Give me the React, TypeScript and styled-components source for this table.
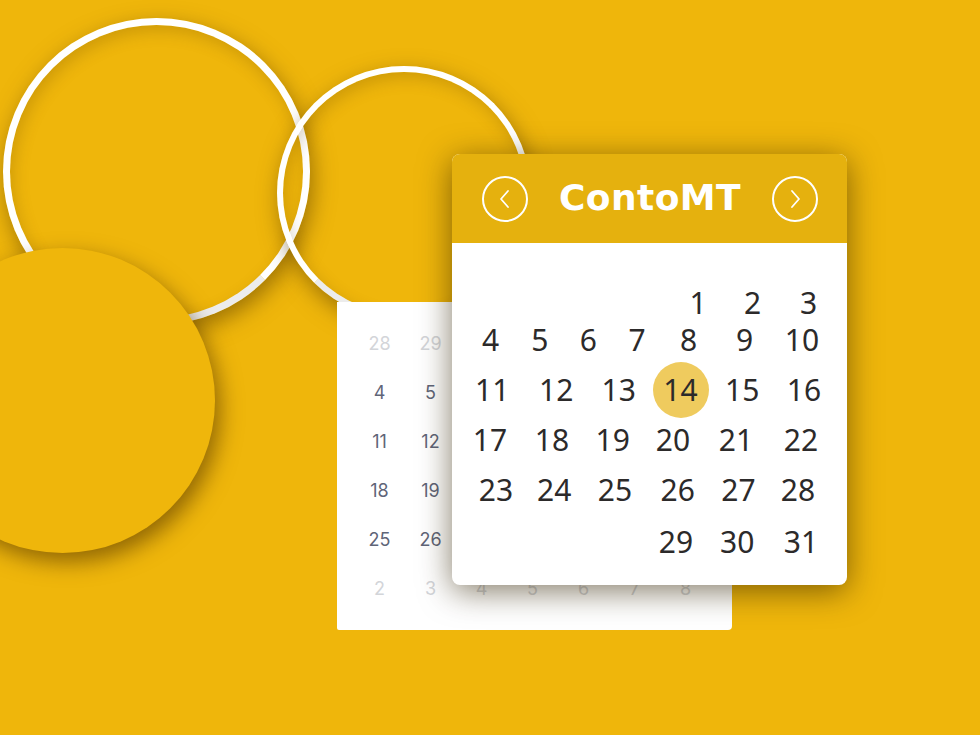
import React from "react";
import styled, { createGlobalStyle } from "styled-components";

const Global = createGlobalStyle`
  html, body { margin: 0; padding: 0; background: #efb60b; }
  body { overflow: hidden; }
`;

const Stage = styled.div`
  position: relative;
  width: 980px;
  height: 735px;
  overflow: hidden;
  background: #efb60b;
`;

const Ring = styled.div<{ $x: number; $y: number; $size: number; $stroke: number }>`
  position: absolute;
  left: ${(p) => p.$x}px;
  top: ${(p) => p.$y}px;
  width: ${(p) => p.$size}px;
  height: ${(p) => p.$size}px;
  box-sizing: border-box;
  border-radius: 50%;
  border: ${(p) => p.$stroke}px solid #ffffff;
  border-bottom-color: #ececec;
  box-shadow: 3px 8px 22px rgba(90, 60, 0, 0.55), inset 3px 6px 16px rgba(90, 60, 0, 0.22);
`;

const Disc = styled.div`
  position: absolute;
  left: -90px;
  top: 248px;
  width: 305px;
  height: 305px;
  border-radius: 50%;
  background: #efb60b;
  box-shadow: 5px 9px 22px rgba(80, 50, 0, 0.6);
`;

const BackCard = styled.div`
  position: absolute;
  left: 337px;
  top: 302px;
  width: 395px;
  height: 328px;
  box-sizing: border-box;
  background: #ffffff;
  border-radius: 0 0 4px 2px;
  padding: 17px 0 0 17px;
  display: grid;
  grid-template-columns: repeat(7, 51px);
  grid-auto-rows: 49px;
  align-content: start;
  font-family: Inter, "Liberation Sans", sans-serif;
  font-size: 18px;
  font-weight: 400;
`;

const BackDay = styled.div<{ $muted?: boolean }>`
  display: flex;
  align-items: center;
  justify-content: center;
  color: ${(p) => (p.$muted ? "#d3d5d9" : "#5f6578")};
`;

const Card = styled.div`
  position: absolute;
  left: 452px;
  top: 154px;
  width: 395px;
  height: 431px;
  border-radius: 8px;
  overflow: hidden;
  background: #ffffff;
  box-shadow: 0 6px 32px rgba(50, 35, 0, 0.6);
  display: flex;
  flex-direction: column;
`;

const Header = styled.div`
  height: 89px;
  flex: none;
  background: #e5b10e;
  display: flex;
  align-items: center;
  justify-content: space-between;
  padding: 0 29px 0 30px;
`;

const NavButton = styled.div`
  width: 46px;
  height: 46px;
  box-sizing: border-box;
  border-radius: 50%;
  border: 2px solid #ffffff;
  display: flex;
  align-items: center;
  justify-content: center;
`;

const Title = styled.div`
  font-family: "DejaVu Sans", sans-serif;
  font-weight: 700;
  font-size: 36px;
  color: #ffffff;
  letter-spacing: 0.4px;
  margin-top: -2px;
`;

const Body = styled.div`
  padding: 35px 0 18px 0;
  font-family: "Noto Sans", sans-serif;
  font-size: 30px;
  color: #2c2a2a;
`;

const Row = styled.div<{ $cols: string; $pad: number; $shift?: number }>`
  display: grid;
  grid-template-columns: ${(p) => p.$cols};
  height: 50px;
  padding-left: ${(p) => p.$pad}px;
  margin-top: ${(p) => p.$shift ?? 0}px;
`;

const Day = styled.div<{ $active?: boolean }>`
  position: relative;
  display: flex;
  align-items: center;
  justify-content: center;
  line-height: 26px;
  span { position: relative; z-index: 1; }
  ${(p) =>
    p.$active
      ? `&::before {
          content: "";
          position: absolute;
          left: 50%;
          top: 50%;
          width: 56px;
          height: 56px;
          margin: -28px 0 0 -28px;
          border-radius: 50%;
          background: #efcb5e;
        }`
      : ""}
`;

const Chevron = ({ dir }: { dir: "left" | "right" }) => (
  <svg width="14" height="22" viewBox="0 0 14 22" fill="none">
    <polyline
      points={dir === "left" ? "10,3 3,11 10,19" : "4,3 11,11 4,19"}
      stroke="#ffffff"
      strokeWidth="1.8"
      strokeLinecap="round"
      strokeLinejoin="round"
    />
  </svg>
);

// Back calendar: only the columns not covered by the front card carry numbers,
// except the last row which peeks out beneath it.
const backDays: { d?: number; m?: boolean }[] = [
  { d: 28, m: true }, { d: 29, m: true }, {}, {}, {}, {}, {},
  { d: 4 }, { d: 5 }, {}, {}, {}, {}, {},
  { d: 11 }, { d: 12 }, {}, {}, {}, {}, {},
  { d: 18 }, { d: 19 }, {}, {}, {}, {}, {},
  { d: 25 }, { d: 26 }, {}, {}, {}, {}, {},
  ...[2, 3, 4, 5, 6, 7, 8].map((d) => ({ d, m: true })),
];

const rows: { cols: string; pad: number; shift?: number; days: number[] }[] = [
  { cols: "54px 55px 57px", pad: 219, days: [1, 2, 3] },
  { cols: "50px 48.5px 48.5px 49px 54px 58px 57px", pad: 13.5, shift: -13, days: [4, 5, 6, 7, 8, 9, 10] },
  { cols: "64.5px 63.5px 61.5px 62px 61.5px 62px", pad: 8, days: [11, 12, 13, 14, 15, 16] },
  { cols: "62px 62px 59.5px 61px 65px 65px", pad: 7, days: [17, 18, 19, 20, 21, 22] },
  { cols: "58px 58.5px 63px 62.5px 59px 60px", pad: 15, days: [23, 24, 25, 26, 27, 28] },
  { cols: "60px 62.5px 65px", pad: 194, shift: 2, days: [29, 30, 31] },
];

export default function App() {
  return (
    <>
      <Global />
      <Stage>
        <Ring $x={3} $y={18} $size={307} $stroke={7} />
        <Ring $x={277} $y={66} $size={254} $stroke={6} />
        <Disc />
        <BackCard>
          {backDays.map((b, i) => (
            <BackDay key={i} $muted={b.m}>
              {b.d ?? ""}
            </BackDay>
          ))}
        </BackCard>
        <Card>
          <Header>
            <NavButton>
              <Chevron dir="left" />
            </NavButton>
            <Title>ContoMT</Title>
            <NavButton>
              <Chevron dir="right" />
            </NavButton>
          </Header>
          <Body>
            {rows.map((r, i) => (
              <Row key={i} $cols={r.cols} $pad={r.pad} $shift={r.shift}>
                {r.days.map((d) => (
                  <Day key={d} $active={d === 14}>
                    <span>{d}</span>
                  </Day>
                ))}
              </Row>
            ))}
          </Body>
        </Card>
      </Stage>
    </>
  );
}
